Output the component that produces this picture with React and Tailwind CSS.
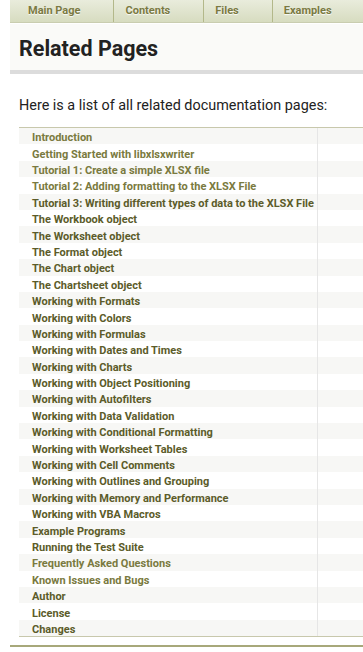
import React from "react";

const pages = [
  ["Introduction", false],
  ["Getting Started with libxlsxwriter", false],
  ["Tutorial 1: Create a simple XLSX file", false],
  ["Tutorial 2: Adding formatting to the XLSX File", false],
  ["Tutorial 3: Writing different types of data to the XLSX File", true],
  ["The Workbook object", true],
  ["The Worksheet object", true],
  ["The Format object", true],
  ["The Chart object", true],
  ["The Chartsheet object", true],
  ["Working with Formats", true],
  ["Working with Colors", true],
  ["Working with Formulas", true],
  ["Working with Dates and Times", true],
  ["Working with Charts", true],
  ["Working with Object Positioning", true],
  ["Working with Autofilters", true],
  ["Working with Data Validation", true],
  ["Working with Conditional Formatting", true],
  ["Working with Worksheet Tables", true],
  ["Working with Cell Comments", true],
  ["Working with Outlines and Grouping", true],
  ["Working with Memory and Performance", true],
  ["Working with VBA Macros", true],
  ["Example Programs", true],
  ["Running the Test Suite", true],
  ["Frequently Asked Questions", false],
  ["Known Issues and Bugs", false],
  ["Author", true],
  ["License", true],
  ["Changes", true],
];

const tabs = ["Main Page", "Contents", "Files", "Examples"];

export default function App() {
  return (
    <div className="min-h-screen bg-white overflow-hidden font-['Roboto',sans-serif]">
      <div className="ml-[10px] w-[600px]">
        {/* navbar */}
        <div className="flex h-[23px] pl-[7px] bg-gradient-to-b from-[#e9ecdc] to-[#d7dcc0] border-b border-[#c9cdb0]">
          {tabs.map((t) => (
            <div
              key={t}
              className="flex items-center pl-[11px] pr-[33px] border-r border-[#b3b88a] text-[11px] font-bold text-[#7a7a42] [text-shadow:0_1px_1px_rgba(255,255,255,0.9)]"
            >
              {t}
            </div>
          ))}
        </div>

        {/* header */}
        <div className="bg-[#fafaf8] h-[50px] pl-[9px] pt-[12px] border-b-4 border-[#dcdcdc] mt-px">
          <h1 className="text-[21.5px] leading-[26px] font-bold text-[#222]">Related Pages</h1>
        </div>

        <div className="pl-[9px]">
          <p className="mt-[23px] text-[14.4px] leading-[18px] text-[#222]">
            Here is a list of all related documentation pages:
          </p>

          <div className="mt-[12px] border-t border-[#c8c8ac] border-b">
            {pages.map(([name, dark], i) => (
              <div
                key={name}
                className={`flex h-[16.4px] ${i % 2 === 0 ? "bg-[#f7f7f5]" : "bg-white"}`}
              >
                <div className="w-[299px] border-r border-[#e6e6e6] pl-[13px] pt-[4px] flex items-center">
                  <span
                    className={`text-[11px] leading-[14px] font-bold whitespace-nowrap ${
                      dark ? "text-[#5c5c2a]" : "text-[#7a7a40]"
                    }`}
                  >
                    {name}
                  </span>
                </div>
                <div className="flex-1" />
              </div>
            ))}
          </div>
        </div>

        <div className="mt-[8px] border-t-2 border-[#a7a87a]" />
      </div>
    </div>
  );
}
